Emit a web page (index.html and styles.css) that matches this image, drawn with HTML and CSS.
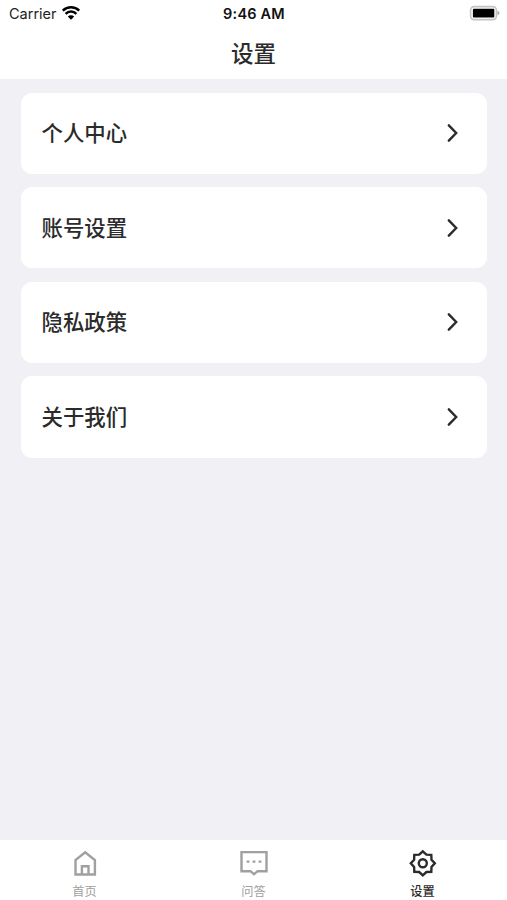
FILE: index.html
```html
<!DOCTYPE html>
<html lang="zh-CN">
<head>
    <meta charset="UTF-8">
    <meta name="viewport" content="width=device-width, initial-scale=1.0">
    <title>设置</title>
    <link rel="stylesheet" href="styles.css">
</head>
<body>
    <header class="header">
        <div class="status-bar">
            <div class="carrier">
                <span>Carrier</span>
                <svg class="wifi" width="20" height="16" viewBox="0 0 20 16">
                    <path d="M1.8 5.6a11.6 11.6 0 0 1 16.4 0M4.6 8.8a7.6 7.6 0 0 1 10.8 0" fill="none" stroke="#000" stroke-width="2.4"/>
                    <path d="M10 14.8L6.8 11.6a4.5 4.5 0 0 1 6.4 0z"/>
                </svg>
            </div>
            <span class="time">9:46 AM</span>
            <div class="battery">
                <svg width="32" height="16" viewBox="0 0 32 16">
                    <rect x="1.6" y="1.6" width="25.8" height="13" rx="3.5" fill="#fff" stroke="#c4c4c4" stroke-width="1.6"/>
                    <rect x="3.9" y="3.7" width="21.4" height="8.8" rx="1"/>
                    <path d="M28.5 5.5q4 2.5 0 5z" fill="#aaa"/>
                </svg>
            </div>
        </div>
        <h1 class="title">设置</h1>
    </header>

    <main class="list">
        <a class="item">
            <span>个人中心</span>
            <svg class="arrow" width="14" height="20" viewBox="0 0 14 20"><path d="M2.8 2.3L10.2 10L2.8 17.7"/></svg>
        </a>
        <a class="item">
            <span>账号设置</span>
            <svg class="arrow" width="14" height="20" viewBox="0 0 14 20"><path d="M2.8 2.3L10.2 10L2.8 17.7"/></svg>
        </a>
        <a class="item">
            <span>隐私政策</span>
            <svg class="arrow" width="14" height="20" viewBox="0 0 14 20"><path d="M2.8 2.3L10.2 10L2.8 17.7"/></svg>
        </a>
        <a class="item">
            <span>关于我们</span>
            <svg class="arrow" width="14" height="20" viewBox="0 0 14 20"><path d="M2.8 2.3L10.2 10L2.8 17.7"/></svg>
        </a>
    </main>

    <nav class="tabs">
        <a class="tab">
            <svg width="30" height="30" viewBox="0 0 30 30">
                <path d="M5.5 26.5V12L15.2 4.3L24.9 12V26.5z"/>
                <path d="M11.9 26.5V18.2H18.5V26.5"/>
            </svg>
            <span>首页</span>
        </a>
        <a class="tab">
            <svg width="30" height="30" viewBox="0 0 30 30">
                <path d="M2.5 4.1H27.5V23.2H18.6L15 26.2L11.4 23.2H2.5z"/>
                <path d="M7.6 13.6H10.4M13.6 13.6H16.4M19.6 13.6H22.4"/>
            </svg>
            <span>问答</span>
        </a>
        <a class="tab active">
            <svg width="30" height="30" viewBox="0 0 30 30">
                <path d="M14.8 3.3L18.4 6.6L23.3 6.8L23.5 11.7L26.8 15.3L23.5 18.9L23.3 23.8L18.4 24L14.8 27.3L11.2 24L6.3 23.8L6.1 18.9L2.8 15.3L6.1 11.7L6.3 6.8L11.2 6.6z"/>
                <circle cx="14.8" cy="15.3" r="4"/>
            </svg>
            <span>设置</span>
        </a>
    </nav>
</body>
</html>
```

FILE: styles.css
```css
* {
    margin: 0;
    padding: 0;
    box-sizing: border-box;
}

body {
    height: 100vh;
    display: flex;
    flex-direction: column;
    background: #f0f0f5;
    color: #2b2b2b;
    font-family: Inter, "Noto Sans CJK SC", sans-serif;
    overflow: hidden;
}

.header {
    height: 78.5px;
    background: #fff;
}

.status-bar {
    height: 27px;
    padding: 0 6px 0 9px;
    display: grid;
    grid-template-columns: 1fr auto 1fr;
    align-items: center;
    font-size: 14.5px;
    color: #222;
}

.carrier {
    display: flex;
    align-items: center;
    gap: 4px;
}

.wifi {
    margin-top: -2px;
}

.time {
    padding-right: 2px;
    font-weight: 600;
    letter-spacing: 0.2px;
    color: #111;
}

.battery {
    display: flex;
    justify-content: flex-end;
    margin-top: -1px;
}

.title {
    font-size: 22.5px;
    font-weight: 500;
    line-height: 54px;
    text-align: center;
}

.list {
    flex: 1;
    padding: 14px 20px 0 21px;
    display: flex;
    flex-direction: column;
    gap: 13.2px;
}

.item {
    height: 81.4px;
    padding: 0 27.5px 0 20.5px;
    display: flex;
    align-items: center;
    justify-content: space-between;
    background: #fff;
    border-radius: 11px;
    font-size: 21.4px;
    font-weight: 500;
}

.item span {
    padding-bottom: 3px;
}

.arrow path {
    fill: none;
    stroke: #2b2b2b;
    stroke-width: 2.4;
    stroke-linecap: round;
}

.tabs {
    height: 60px;
    display: flex;
    background: #fff;
}

.tab {
    flex: 1;
    padding-top: 8px;
    display: flex;
    flex-direction: column;
    align-items: center;
    color: #a0a0a0;
    font-size: 12.2px;
    line-height: 28px;
}

.tab svg {
    flex-shrink: 0;
    fill: none;
    stroke: currentColor;
    stroke-width: 2.4;
}

.tab.active {
    color: #2b2b2b;
    font-weight: 500;
}
```
